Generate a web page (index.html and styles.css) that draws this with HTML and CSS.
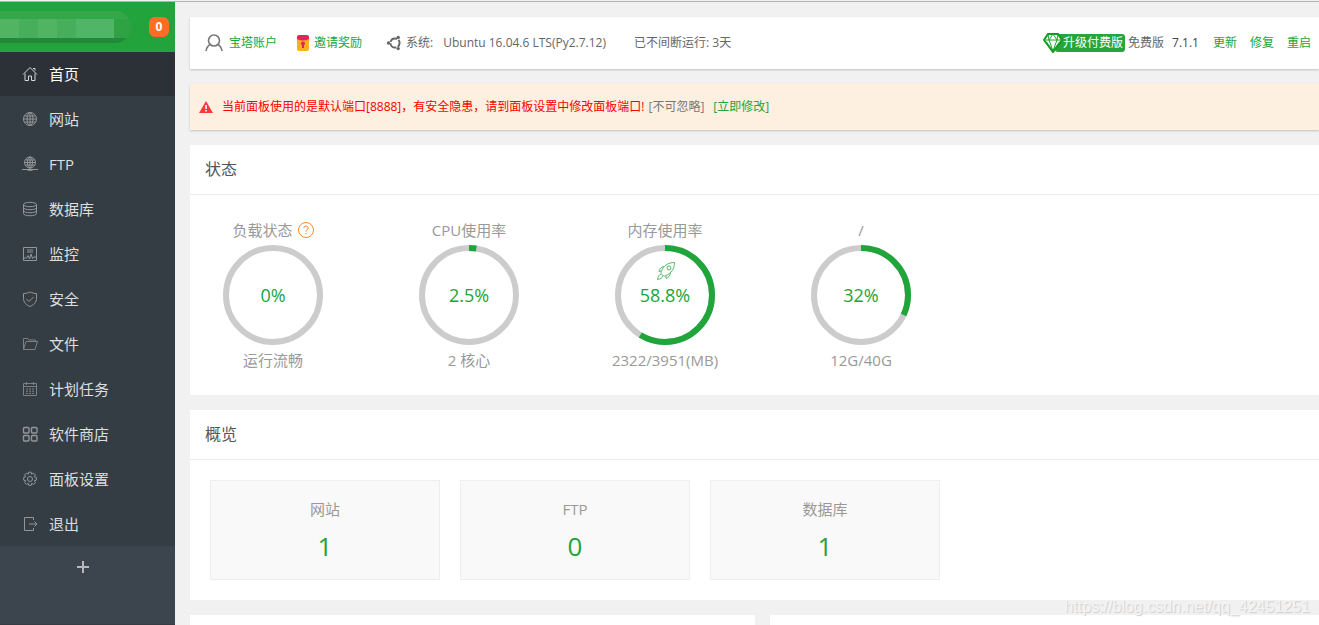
FILE: index.html
```html
<!DOCTYPE html>
<html lang="zh-CN">
<head>
<meta charset="utf-8">
<title>宝塔面板</title>
<link rel="stylesheet" href="styles.css">
</head>
<body>
<div class="layout">
  <aside class="sidebar">
    <div class="account">
      <div class="account-pill"><span class="m1"></span><span class="m2"></span><span class="m1"></span><span class="m2"></span><span class="m3"></span></div>
      <button class="badge" type="button">0</button>
    </div>
    <nav class="menu">
      <a href="#" class="item active"><svg class="icon" viewBox="0 0 16 16"><path d="M1 8.500 8 1.500l7 7M3 7.500v7h3.500V10h3v4.500H13v-7M11 2.500h2v2"/></svg>首页</a>
      <a href="#" class="item"><svg class="icon" viewBox="0 0 16 16"><circle cx="8" cy="8" r="6.500"/><ellipse cx="8" cy="8" rx="3" ry="6.500"/><path d="M8 1.500v13M1.500 8h13M2.500 5h11M2.500 11h11"/></svg>网站</a>
      <a href="#" class="item"><svg class="icon" viewBox="0 0 16 16"><circle cx="8" cy="6.500" r="5.500"/><ellipse cx="8" cy="6.500" rx="2.500" ry="5.500"/><path d="M8 1v12M2.500 6.500h11M3.300 4h9.400M3.300 9h9.400M0 13.500h16M5.500 14.300h5"/></svg>FTP</a>
      <a href="#" class="item"><svg class="icon" viewBox="0 0 16 16"><ellipse cx="8" cy="3.500" rx="6.500" ry="2.200"/><path d="M1.500 3.500v9c0 3 13 3 13 0v-9M1.500 6.500c0 3 13 3 13 0M1.500 9.500c0 3 13 3 13 0"/></svg>数据库</a>
      <a href="#" class="item"><svg class="icon" viewBox="0 0 16 16"><path d="M1.500 1.500h13v13h-13zM5 4h6M5 6h6M2 12h2.500L6 9.500 7.500 13 9 8l1.500 4.500L12 11h2"/></svg>监控</a>
      <a href="#" class="item"><svg class="icon" viewBox="0 0 16 16"><path d="M8 1c2 1 4.500 1.500 6.500 1.500v5C14.500 11 12 14 8 15.500 4 14 1.500 11 1.500 7.500v-5C3.500 2.500 6 2 8 1zM4.500 8 7 10.500 11.500 6"/></svg>安全</a>
      <a href="#" class="item dim"><svg class="icon" viewBox="0 0 16 16"><path d="M1.500 13.500v-11h4.500l1 1.500h6.500v1.500M1.500 13.500 4 5.500h11.500l-2.500 8z"/></svg>文件</a>
      <a href="#" class="item dim"><svg class="icon" viewBox="0 0 16 16"><path d="M1.500 2.500h13v12h-13zM1.500 5.500h13M4.500 1v3M11.500 1v3M4 8h2M7 8h2M10 8h2M4 10.200h2M7 10.200h2M10 10.200h2M4 12.400h2M7 12.400h2M10 12.400h2"/></svg>计划任务</a>
      <a href="#" class="item"><svg class="icon bold" viewBox="0 0 16 16"><rect x="1.500" y="1.500" width="5.500" height="5.500" rx="1"/><rect x="9.500" y="1.500" width="5.500" height="5.500" rx="1"/><rect x="1.500" y="9.500" width="5.500" height="5.500" rx="1"/><rect x="9.500" y="9.500" width="5.500" height="5.500" rx="1"/></svg>软件商店</a>
      <a href="#" class="item"><svg class="icon" viewBox="0 0 16 16"><circle cx="8" cy="8" r="2.500"/><path d="M6.800 1.200h2.400l.5 2 1.900-1.100 1.800 1.800-1.100 1.900 2 .5v2.900l-2 .5 1.100 1.900-1.800 1.800-1.900-1.100-.5 2H6.800l-.5-2-1.900 1.100-1.800-1.800 1.100-1.900-2-.5V6.300l2-.5-1.100-1.900 1.800-1.800 1.900 1.100z"/></svg>面板设置</a>
      <a href="#" class="item"><svg class="icon" viewBox="0 0 16 16"><path d="M11.500 4V1.500H2.500v13h9V12M7 8h8M12.500 5.500 15 8l-2.500 2.500"/></svg>退出</a>
    </nav>
    <button class="add" type="button" aria-label="添加"><svg viewBox="0 0 14 14"><path d="M7 1v12M1 7h12"/></svg></button>
  </aside>

  <main class="main">
    <header class="topbar">
      <a href="#" class="entry user"><svg viewBox="0 0 18 18"><circle cx="9" cy="6.500" r="5.500"/><path d="M1 17c.5-3.500 2-5.500 4.500-6.500M17 17c-.5-3.500-2-5.500-4.500-6.500"/></svg>宝塔账户</a>
      <a href="#" class="entry reward"><svg viewBox="0 0 12 16"><rect y="1" width="12" height="15" rx="2" fill="#fdaf20"/><path d="M0 4V2Q0 0 2 0h8q2 0 2 2v2Q6 7 0 4z" fill="#e0245e"/><circle cx="6" cy="8.500" r="2" fill="#e0245e"/><path d="M5 9h2v4H5z" fill="#e0245e"/></svg>邀请奖励</a>
      <span class="entry system"><svg viewBox="0 0 16 16"><circle cx="9" cy="8" r="4.600" fill="none" stroke="#666" stroke-width="2" stroke-dasharray="8.200 1.430" stroke-dashoffset="4"/><circle cx="2.500" cy="8" r="1.700"/><circle cx="12.200" cy="2.400" r="1.700"/><circle cx="12.200" cy="13.600" r="1.700"/></svg>系统:</span>
      <span class="os">Ubuntu 16.04.6 LTS(Py2.7.12)</span>
      <span class="uptime">已不间断运行: 3天</span>
      <div class="version">
        <a href="#" class="upgrade"><svg viewBox="0 0 20 20"><path d="M5 1h10l4 6-9 12L1 7z" fill="#fff" stroke="#119b1f" stroke-width="2"/><path d="M1 7h18M6 7l4 11 4-11M5 1l1 6 4-6 4 6 1-6M3.500 9l5 7M16.500 9l-5 7" fill="none" stroke="#14a829"/></svg><span>升级付费版</span></a>
        <span>免费版</span>
        <span class="number">7.1.1</span>
        <a href="#">更新</a>
        <a href="#">修复</a>
        <a href="#">重启</a>
      </div>
    </header>

    <section class="alert">
      <svg viewBox="0 0 14 12"><path d="M7 0 14 12H0z" fill="#f33b3b"/><path d="M7 4v4M7 9v1.500" stroke="#fff" stroke-width="1.600"/></svg>
      <span>当前面板使用的是默认端口[8888]，有安全隐患，请到面板设置中修改面板端口!</span>
      <span class="muted">[不可忽略]</span>
      <a href="#">[立即修改]</a>
    </section>

    <section class="panel">
      <h2>状态</h2>
      <div class="gauges">
        <div class="gauge">
          <h3>负载状态<svg class="help" viewBox="0 0 16 16"><circle cx="8" cy="8" r="7.500"/><path d="M5.800 6.200c0-3 4.400-2.700 4.400-.2C10.200 7.700 8 7.500 8 9.700M8 11v1.300"/></svg></h3>
          <div class="ring"><svg viewBox="0 0 100 100"><circle cx="50" cy="50" r="47"/></svg><strong>0%</strong></div>
          <p>运行流畅</p>
        </div>
        <div class="gauge">
          <h3>CPU使用率</h3>
          <div class="ring"><svg viewBox="0 0 100 100"><circle cx="50" cy="50" r="47"/><circle class="value" cx="50" cy="50" r="47" pathLength="100" stroke-dasharray="2.500 100"/></svg><strong>2.5%</strong></div>
          <p>2 核心</p>
        </div>
        <div class="gauge">
          <h3>内存使用率</h3>
          <div class="ring"><svg viewBox="0 0 100 100"><circle cx="50" cy="50" r="47"/><circle class="value" cx="50" cy="50" r="47" pathLength="100" stroke-dasharray="58.800 100"/><g class="rocket"><path d="M59.500 17.500c-5 0-9.500 2-12 6.500-1 2-1.500 3.500-1.500 4.500l2.500 2.500c1.500 0 3-.5 4.500-1.500 4.500-3 6.500-7 6.500-12z"/><circle cx="54" cy="23" r="2"/><path d="M49 21.500c-3 .5-4.500 2.500-5 5l2.500-.5M55.500 28c-.5 3-2 4.500-4.500 5.500V31M46 29.500c-2 0-3 2-3.500 5 3-.5 5-1.500 5-3.500"/></g></svg><strong>58.8%</strong></div>
          <p>2322/3951(MB)</p>
        </div>
        <div class="gauge">
          <h3>/</h3>
          <div class="ring"><svg viewBox="0 0 100 100"><circle cx="50" cy="50" r="47"/><circle class="value" cx="50" cy="50" r="47" pathLength="100" stroke-dasharray="32 100"/></svg><strong>32%</strong></div>
          <p>12G/40G</p>
        </div>
      </div>
    </section>

    <section class="panel">
      <h2>概览</h2>
      <div class="cards">
        <div class="card"><h3>网站</h3><a href="#">1</a></div>
        <div class="card"><h3>FTP</h3><a href="#">0</a></div>
        <div class="card"><h3>数据库</h3><a href="#">1</a></div>
      </div>
    </section>

    <div class="lower">
      <section></section>
      <section></section>
    </div>
  </main>
</div>
<div class="watermark">https://blog.csdn.net/qq_42451251</div>
</body>
</html>
```
FILE: styles.css
```css
*, *::before { box-sizing: border-box; }

body {
  margin: 0;
  height: 100vh;
  overflow: hidden;
  display: flex;
  flex-direction: column;
  font-family: "Open Sans", "Noto Sans CJK SC", sans-serif;
  font-size: 12px;
  line-height: 20px;
  color: #666;
  background: #f1f1f1;
}

body::before {
  content: "";
  flex: none;
  height: 2px;
  background: #f1f1f1;
  border-bottom: 1px solid #b4b4b4;
}

a { color: #20a53a; text-decoration: none; }
button { padding: 0; border: 0; font: inherit; cursor: pointer; }
h2, h3, p { margin: 0; font-weight: 400; }
svg { display: block; flex: none; }

.layout { flex: 1; min-height: 0; display: flex; }

.sidebar {
  flex: none;
  width: 175px;
  display: flex;
  flex-direction: column;
  background: #3c444d;
  border-bottom: 1px solid #353c44;
}

.account {
  height: 50px;
  padding-right: 6px;
  display: flex;
  align-items: center;
  justify-content: space-between;
  background: #23a33b;
}

.account-pill {
  width: 131px;
  height: 32px;
  padding: 8px 17px 5px 0;
  display: flex;
  overflow: hidden;
  border-radius: 0 16px 16px 0;
  background: linear-gradient(#35a74b 8px, #2fa344 8px, #2fa344 27px, #22883a 27px);
}

.account-pill span { flex: 1; }
.m1 { background: #50b463; }
.m2 { background: #47af5c; }
.m3 { background: #50b566; }
.account-pill .m3 { flex: 2; }

.badge {
  width: 20px;
  height: 20px;
  border-radius: 6px;
  background: #ff6c26;
  color: #fff;
  font-weight: 700;
  line-height: 20px;
}

.menu {
  display: flex;
  flex-direction: column;
  gap: 1px;
  background: #353d44;
}

.item {
  height: 44px;
  padding-left: 22px;
  display: flex;
  align-items: center;
  gap: 11px;
  font-size: 15px;
  color: #dcdedf;
}

.item.active { background: #2c3138; color: #fff; }

.icon {
  width: 16px;
  height: 16px;
  fill: none;
  stroke: #92979b;
  stroke-width: 1;
}

.active .icon { stroke: #d5d6d8; }
.dim .icon { stroke: #7b8287; }
.bold { stroke-width: 1.4; }

.add {
  height: 42px;
  padding-right: 10px;
  display: flex;
  align-items: center;
  justify-content: center;
  background: transparent;
}

.add svg { width: 14px; height: 14px; stroke: #b6b9bc; stroke-width: 2; }

.main {
  flex: 1;
  min-width: 0;
  padding: 15px 0 0 15px;
  display: flex;
  flex-direction: column;
  gap: 15px;
}

.topbar, .alert {
  flex: none;
  display: flex;
  align-items: center;
  white-space: nowrap;
  box-shadow: 0 1px 2px rgba(0, 0, 0, .2);
}

.topbar { height: 52px; padding: 0 8px 0 15px; background: #fff; }
.entry { display: flex; align-items: center; }
.user { gap: 6px; }
.user svg { width: 18px; height: 18px; fill: none; stroke: #777; stroke-width: 1.6; }
.reward { margin-left: 20px; gap: 5px; }
.reward svg { width: 12px; height: 16px; }
.system { margin-left: 24px; gap: 4px; }
.system svg { width: 16px; height: 16px; fill: #666; }
.os { margin-left: 10px; }
.uptime { margin-left: 28px; }

.version {
  margin-left: auto;
  display: flex;
  align-items: center;
  gap: 13px;
}

.upgrade { display: flex; align-items: center; margin-right: -10px; color: #fff; }
.upgrade svg { position: relative; width: 20px; height: 20px; margin-right: -8px; }
.upgrade span {
  height: 18px;
  padding: 0 2px 0 8px;
  line-height: 17px;
  border-radius: 3px;
  background: #26a53c;
}
.number { margin: 0 1px 0 -5px; color: #444; }

.alert {
  height: 46px;
  padding-left: 9px;
  gap: 4px;
  background: #fdf0e1;
  color: #f00;
}

.alert svg { width: 14px; height: 12px; margin-right: 5px; }
.alert .muted { color: #777; }
.alert a { margin-left: 5px; }

.panel { flex: none; background: #fff; }

.panel h2 {
  height: 50px;
  padding-left: 15px;
  border-bottom: 1px solid #ececec;
  font-size: 16px;
  line-height: 49px;
  color: #555;
}

.gauges { display: flex; gap: 30px; padding: 20px 0; }

.gauge {
  width: 166px;
  display: flex;
  flex-direction: column;
  align-items: center;
}

.gauge h3, .gauge p {
  display: flex;
  align-items: center;
  gap: 5px;
  height: 30px;
  font-size: 15px;
  color: #999;
}

.help { width: 16px; height: 16px; fill: none; stroke: #fb8c28; }

.ring { display: grid; width: 100px; height: 100px; place-items: center; }
.ring svg, .ring strong { grid-area: 1 / 1; }
.ring svg { width: 100px; height: 100px; fill: none; }
.ring circle { stroke: #ccc; stroke-width: 6; }
.ring .value { stroke: #20a53a; transform: rotate(-90deg); transform-origin: center; }
.ring .rocket, .ring .rocket circle { stroke: #54bb68; stroke-width: 1; }
.ring strong { font-size: 18px; font-weight: 400; color: #20a53a; }

.cards { display: flex; gap: 20px; padding: 20px; }

.card {
  width: 230px;
  height: 100px;
  padding-top: 13px;
  border: 1px solid #eee;
  background: #f9f9f9;
  text-align: center;
}

.card h3 { height: 30px; font-size: 15px; line-height: 30px; color: #999; }
.card a { display: block; font-size: 26px; line-height: 44px; }

.lower {
  flex: 1;
  min-height: 0;
  display: grid;
  grid-template-columns: 565fr 549fr;
  gap: 15px;
}

.lower section { background: #fff; }

.watermark {
  position: absolute;
  right: 9px;
  bottom: 9px;
  font: 16px/18px "Liberation Sans", sans-serif;
  color: #f4f4f4;
  text-shadow: 1px 1px 1px #ccc;
}
```
